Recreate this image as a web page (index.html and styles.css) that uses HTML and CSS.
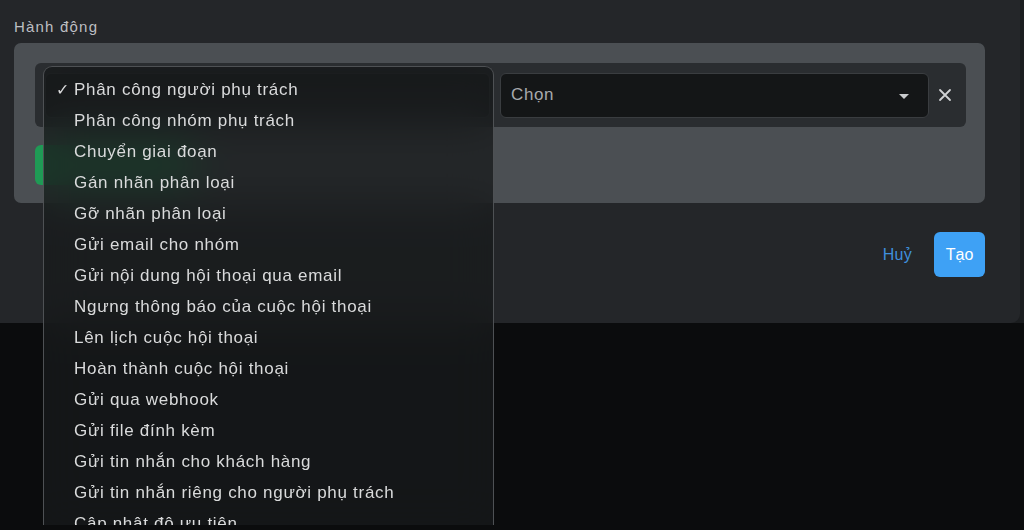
FILE: index.html
```html
<!DOCTYPE html>
<html lang="vi">
<head>
<meta charset="utf-8">
<link rel="stylesheet" href="styles.css">
</head>
<body>
<div class="top">
  <div class="modal">
    <div class="label">Hành động</div>
    <div class="panel">
      <div class="row">
        <div class="select select-type"></div>
        <div class="select select-value">
          <span class="placeholder">Chọn</span>
          <span class="caret"></span>
        </div>
        <button class="remove" aria-label="Xoá">
          <svg width="14" height="14" viewBox="0 0 14 14"><path d="M2 2L12 12M12 2L2 12" stroke="#d0d2d4" stroke-width="1.8" stroke-linecap="round"/></svg>
        </button>
      </div>
      <div class="add-btn"></div>
    </div>
    <div class="footer">
      <button class="cancel">Huỷ</button>
      <button class="create">Tạo</button>
    </div>
  </div>
</div>
<ul class="menu">
  <li class="checked"><span class="check">✓</span>Phân công người phụ trách</li>
  <li>Phân công nhóm phụ trách</li>
  <li>Chuyển giai đoạn</li>
  <li>Gán nhãn phân loại</li>
  <li>Gỡ nhãn phân loại</li>
  <li>Gửi email cho nhóm</li>
  <li>Gửi nội dung hội thoại qua email</li>
  <li>Ngưng thông báo của cuộc hội thoại</li>
  <li>Lên lịch cuộc hội thoại</li>
  <li>Hoàn thành cuộc hội thoại</li>
  <li>Gửi qua webhook</li>
  <li>Gửi file đính kèm</li>
  <li>Gửi tin nhắn cho khách hàng</li>
  <li>Gửi tin nhắn riêng cho người phụ trách</li>
  <li>Cập nhật độ ưu tiên</li>
</ul>
</body>
</html>
```
FILE: styles.css
```css
* { box-sizing: border-box; }
html, body { margin: 0; padding: 0; }
body {
  background: #0b0c0d;
  font-family: "Liberation Sans", Arial, sans-serif;
  width: 1024px;
  height: 530px;
  overflow: hidden;
  position: relative;
}
.top {
  background: #1b1d1f;
  height: 323px;
}
.modal {
  width: 1020px;
  height: 323px;
  background: #242629;
  border-bottom-right-radius: 9px;
  padding: 18px 35px 0 14px;
}
.label {
  color: #bdbfc2;
  font-size: 15px;
  letter-spacing: 1.2px;
  line-height: 18px;
  margin-bottom: 7px;
}
.panel {
  background: #4b4f53;
  border-radius: 7px;
  padding: 20px 19px 18px 21px;
}
.row {
  background: #2a2d30;
  border-radius: 6px;
  height: 64px;
  display: flex;
  align-items: center;
  gap: 10px;
  padding: 0 12px 0 10px;
}
.select {
  height: 45px;
  border-radius: 6px;
  background: #141617;
  border: 1px solid #3a3d40;
  display: flex;
  align-items: center;
}
.select-type { width: 445px; }
.select-value {
  flex: 1;
  padding: 0 19px 0 10px;
  justify-content: space-between;
}
.placeholder {
  color: #a8abae;
  font-size: 17px;
  letter-spacing: 0.6px;
}
.caret {
  width: 0;
  height: 0;
  border-left: 5px solid transparent;
  border-right: 5px solid transparent;
  border-top: 5px solid #c9cbcd;
  margin-top: 2px;
}
.remove {
  background: none;
  border: 0;
  padding: 0;
  width: 18px;
  height: 18px;
  display: flex;
  align-items: center;
  justify-content: center;
  margin-left: -3px;
}
.add-btn {
  margin-top: 18px;
  width: 160px;
  height: 40px;
  border-radius: 6px;
  background: #1f9a55;
}
.footer {
  display: flex;
  justify-content: flex-end;
  align-items: center;
  gap: 22px;
  margin-top: 29px;
}
.cancel {
  background: none;
  border: 0;
  color: #3f8fdc;
  font-family: inherit;
  font-size: 16px;
  letter-spacing: 0.3px;
  padding: 0;
}
.create {
  background: #3ea1f5;
  border: 0;
  border-radius: 6px;
  color: #ffffff;
  font-family: inherit;
  font-size: 16px;
  width: 51px;
  height: 45px;
  padding: 0;
}
.menu {
  position: absolute;
  left: 43px;
  top: 66px;
  width: 451px;
  height: 459px;
  margin: 0;
  padding: 7px 0 0;
  list-style: none;
  background: rgba(24, 26, 28, 0.76);
  backdrop-filter: blur(22px);
  border: 1px solid #4e5154;
  border-bottom: 0;
  border-radius: 9px 9px 0 0;
  overflow: hidden;
}
.menu li {
  height: 31px;
  line-height: 31px;
  padding-left: 30px;
  color: #dadbdc;
  font-size: 17px;
  letter-spacing: 0.7px;
  white-space: nowrap;
  position: relative;
}
.check {
  position: absolute;
  left: 12px;
  top: 0;
  font-size: 16px;
}
```
